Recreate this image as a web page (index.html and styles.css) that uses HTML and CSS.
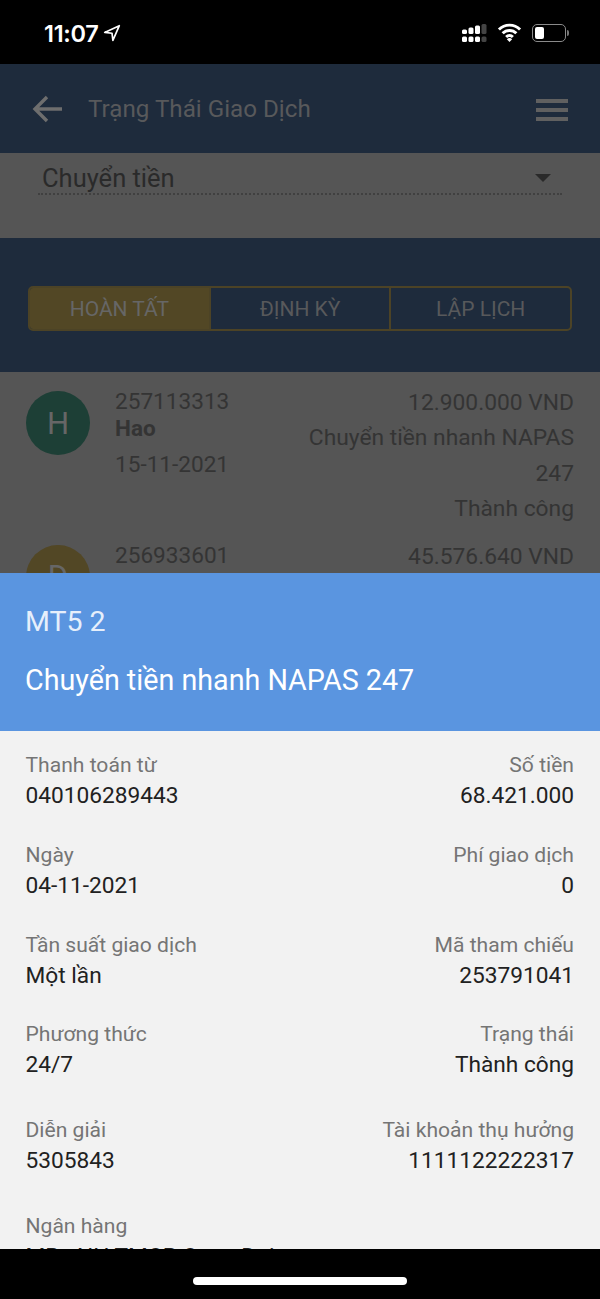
FILE: index.html
```html
<!DOCTYPE html>
<html>
<head>
  <meta charset="UTF-8">
  <title>Trạng Thái Giao Dịch</title>
  <link rel="stylesheet" href="styles.css">
</head>
<body>

  <div class="status-bar">
    <div class="status-left">
      <span class="time">11:07</span>
      <svg class="loc" width="18" height="18" viewBox="0 0 16 16"><path d="M14.500 1.500 1.500 7.500 8 8.200 8.800 14.500Z" fill="none" stroke="#fff" stroke-width="1.500" stroke-linejoin="round"/></svg>
    </div>
    <div class="status-right">
      <svg width="25" height="18" viewBox="0 0 25 18">
        <rect x="0" y="5.500" width="5" height="4.500" rx="1.500" fill="#fff"/>
        <rect x="0" y="12.500" width="5" height="5.500" rx="1.500" fill="#fff"/>
        <rect x="6.500" y="3.500" width="5" height="6.500" rx="1.500" fill="#fff"/>
        <rect x="6.500" y="12.500" width="5" height="5.500" rx="1.500" fill="#fff"/>
        <rect x="13" y="1.500" width="5" height="8.500" rx="1.500" fill="#fff"/>
        <rect x="13" y="12.500" width="5" height="5.500" rx="1.500" fill="#fff"/>
        <rect x="19.500" y="0" width="5" height="10" rx="1.500" fill="#444"/>
        <rect x="19.500" y="12.500" width="5" height="5.500" rx="1.500" fill="#444"/>
      </svg>
      <svg class="wifi" width="25" height="19" viewBox="0 0 22 18">
        <path d="M1 6.200a14 14 0 0 1 20 0M4.500 9.800a9 9 0 0 1 13 0M7.800 13.200a4.500 4.500 0 0 1 6.400 0" fill="none" stroke="#fff" stroke-width="2.800"/>
        <path d="M11 18 8.500 15.400a3.500 3.500 0 0 1 5 0Z" fill="#fff"/>
      </svg>
      <div class="battery"><div class="battery-fill"></div></div>
      <div class="battery-cap"></div>
    </div>
  </div>

  <header class="topbar">
    <svg width="32" height="30" viewBox="0 0 32 30"><path d="M30 15H4M15 3 3 15l12 12" fill="none" stroke="#6e6e6e" stroke-width="3.400"/></svg>
    <span class="topbar-title">Trạng Thái Giao Dịch</span>
    <div class="burger"><i></i><i></i><i></i></div>
  </header>

  <div class="filter">
    <div class="select">
      <span>Chuyển tiền</span>
      <div class="caret"></div>
    </div>
  </div>

  <div class="tabs-wrap">
    <div class="tabs">
      <div class="tab active">HOÀN TẤT</div>
      <div class="tab">ĐỊNH KỲ</div>
      <div class="tab">LẬP LỊCH</div>
    </div>
  </div>

  <div class="list">
    <div class="row">
      <div class="avatar green">H</div>
      <div class="row-info">
        <div>257113313</div>
        <div class="row-name">Hao</div>
        <div class="row-date">15-11-2021</div>
      </div>
      <div class="row-right">
        <div>12.900.000 VND</div>
        <div>Chuyển tiền nhanh NAPAS 247</div>
        <div>Thành công</div>
      </div>
    </div>
    <div class="row">
      <div class="avatar yellow">D</div>
      <div class="row-info">
        <div>256933601</div>
      </div>
      <div class="row-right">
        <div>45.576.640 VND</div>
      </div>
    </div>
  </div>

  <div class="sheet-head">
    <div class="sheet-sub">MT5 2</div>
    <div class="sheet-title">Chuyển tiền nhanh NAPAS 247</div>
  </div>

  <div class="sheet-body">
    <div class="pair">
      <div><div class="lbl">Thanh toán từ</div><div class="val">040106289443</div></div>
      <div class="end"><div class="lbl">Số tiền</div><div class="val">68.421.000</div></div>
    </div>
    <div class="pair">
      <div><div class="lbl">Ngày</div><div class="val">04-11-2021</div></div>
      <div class="end"><div class="lbl">Phí giao dịch</div><div class="val">0</div></div>
    </div>
    <div class="pair short">
      <div><div class="lbl">Tần suất giao dịch</div><div class="val">Một lần</div></div>
      <div class="end"><div class="lbl">Mã tham chiếu</div><div class="val">253791041</div></div>
    </div>
    <div class="pair">
      <div><div class="lbl">Phương thức</div><div class="val">24/7</div></div>
      <div class="end"><div class="lbl">Trạng thái</div><div class="val">Thành công</div></div>
    </div>
    <div class="pair tall">
      <div><div class="lbl">Diễn giải</div><div class="val">5305843</div></div>
      <div class="end"><div class="lbl">Tài khoản thụ hưởng</div><div class="val">1111122222317</div></div>
    </div>
    <div class="pair">
      <div><div class="lbl">Ngân hàng</div><div class="val">MB - NH TMCP Quan Doi</div></div>
    </div>
  </div>

  <div class="home-bar"><div class="home-pill"></div></div>

</body>
</html>
```

FILE: styles.css
```css
* { box-sizing: border-box; }
html, body { margin: 0; height: 1299px; overflow: hidden; }
body { width: 600px; font-family: Roboto, sans-serif; background: #000; display: flex; flex-direction: column; }

.status-bar { height: 64px; flex: none; background: #000; color: #fff; display: flex; justify-content: space-between; align-items: center; padding: 2px 31px 0 44px; }
.status-left { display: flex; align-items: center; gap: 5px; }
.time { font-family: Inter, sans-serif; font-size: 23.500px; font-weight: 600; letter-spacing: -0.3px; }
.status-right { display: flex; align-items: center; gap: 10px; }
.wifi { margin-top: -2px; }
.battery { width: 34px; height: 18px; border: 1.500px solid #8a8a8a; border-radius: 5px; padding: 2px; }
.battery-fill { width: 9px; height: 100%; background: #fff; border-radius: 2px; }
.battery-cap { width: 2px; height: 6px; background: #777; border-radius: 0 2px 2px 0; margin-left: -9px; }

.topbar { height: 89px; flex: none; background: #1e2b3c; display: flex; align-items: center; padding: 0 32px; }
.topbar-title { margin-left: 24px; font-size: 24.200px; color: #58595b; flex: 1; }
.burger { display: flex; flex-direction: column; gap: 5px; margin-top: 2px; }
.burger i { display: block; width: 32px; height: 4px; background: #606060; }

.filter { height: 85px; flex: none; background: #555; padding: 7px 38px 0; }
.select { height: 35px; border-bottom: 2px dotted #404040; padding: 2px 0 0 4px; display: flex; justify-content: space-between; align-items: center; font-size: 25.500px; color: #2a2a2a; }
.caret { width: 0; height: 0; border-left: 8px solid transparent; border-right: 8px solid transparent; border-top: 8px solid #2a2a2a; margin-right: 11px; }

.tabs-wrap { height: 134px; flex: none; background: #1e2b3c; padding: 48px 28px 0; }
.tabs { height: 45px; border: 2px solid #4c4326; border-radius: 5px; display: flex; overflow: hidden; }
.tab { flex: 1; display: flex; align-items: center; justify-content: center; font-size: 21px; color: #58595b; border-left: 2px solid #4c4326; }
.tab.active { background: #524725; color: #666; border-left: 0; }

.list { height: 201px; flex: none; background: #555; overflow: hidden; padding: 12px 26px 0; }
.row { display: flex; font-size: 22.800px; color: #343434; margin-bottom: 11.800px; }
.avatar { width: 64px; height: 64px; flex: none; border-radius: 50%; margin: 7px 25px 0 0; display: flex; align-items: center; justify-content: center; font-size: 31px; color: #666; }
.avatar.green { background: #1d3f36; }
.avatar.yellow { background: #524725; }
.row-info { flex: none; width: 180px; line-height: 30px; margin-top: 3px; font-size: 22.600px; }
.row-name { font-size: 22.500px; font-weight: 700; line-height: 23px; }
.row-date { margin-top: 10px; }
.row-right { flex: 1; text-align: right; line-height: 35.300px; margin-top: 1px; }

.sheet-head { height: 158px; flex: none; background: #5a95e0; padding: 31px 26px 0 25px; color: #fff; }
.sheet-sub { font-size: 28.500px; line-height: 36px; color: #e6effb; }
.sheet-title { font-size: 28.700px; line-height: 36px; margin-top: 22px; }

.sheet-body { height: 518px; flex: none; background: #f2f2f2; overflow: hidden; padding: 20px 26px 0 25.500px; }
.pair { height: 90px; display: flex; justify-content: space-between; }
.pair.short { height: 89px; }
.pair.tall { height: 96px; margin-top: 6px; }
.end { text-align: right; }
.lbl { font-size: 21.100px; line-height: 27px; margin-bottom: 1px; color: #757575; }
.val { font-size: 22.700px; line-height: 33px; color: #212121; }

.home-bar { height: 50px; flex: none; background: #000; padding-top: 28px; }
.home-pill { width: 214px; height: 8px; background: #fff; border-radius: 4px; margin: 0 auto; }
```
